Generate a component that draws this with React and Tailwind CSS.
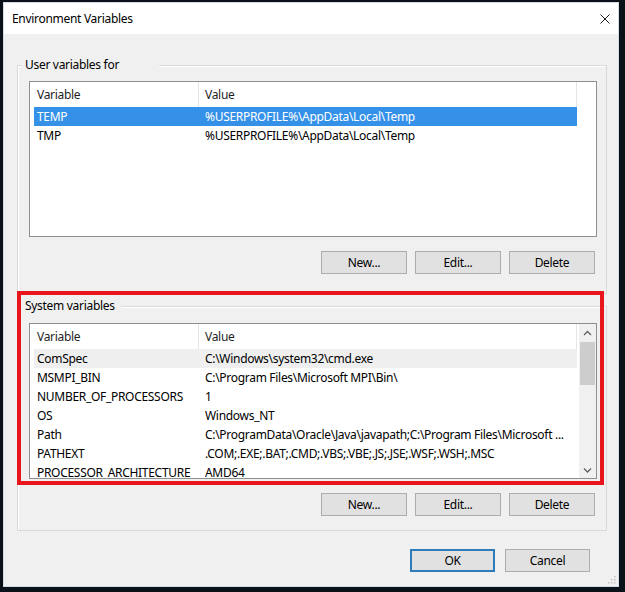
import React from 'react';

const userVars = [
  { name: 'TEMP', value: '%USERPROFILE%\\AppData\\Local\\Temp', state: 'selected' },
  { name: 'TMP', value: '%USERPROFILE%\\AppData\\Local\\Temp' },
];

const systemVars = [
  { name: 'ComSpec', value: 'C:\\Windows\\system32\\cmd.exe', state: 'hover' },
  { name: 'MSMPI_BIN', value: 'C:\\Program Files\\Microsoft MPI\\Bin\\' },
  { name: 'NUMBER_OF_PROCESSORS', value: '1' },
  { name: 'OS', value: 'Windows_NT' },
  { name: 'Path', value: 'C:\\ProgramData\\Oracle\\Java\\javapath;C:\\Program Files\\Microsoft ...' },
  { name: 'PATHEXT', value: '.COM;.EXE;.BAT;.CMD;.VBS;.VBE;.JS;.JSE;.WSF;.WSH;.MSC' },
  { name: 'PROCESSOR_ARCHITECTURE', value: 'AMD64' },
];

const WinButton = ({ children, isDefault, narrow }) => (
  <button
    className={`h-[23px] bg-[#e1e1e1] text-[12px] text-black ${narrow ? 'w-[85px]' : 'w-[86px]'} ${
      isDefault
        ? 'border border-[#2f7cb8] shadow-[inset_0_0_0_1px_#2f7cb8]'
        : 'border border-[#adadad]'
    }`}
  >
    {children}
  </button>
);

const Chevron = ({ down }) => (
  <svg width="9" height="6" viewBox="0 0 9 6">
    <polyline
      points={down ? '1,1.5 4.5,5 8,1.5' : '1,5 4.5,1.5 8,5'}
      fill="none"
      stroke="#606060"
      strokeWidth="1.3"
    />
  </svg>
);

const Scrollbar = () => (
  <div className="w-[17px] shrink-0 bg-[#f0f0f0] flex flex-col">
    <div className="h-[17px] flex items-center justify-center">
      <Chevron />
    </div>
    <div className="h-[43px] mt-[1px] mx-[1px] bg-[#cdcdcd]" />
    <div className="flex-1" />
    <div className="h-[17px] flex items-center justify-center">
      <Chevron down />
    </div>
  </div>
);

const VarList = ({ rows, scroll }) => (
  <div className="ml-[11px] mr-[9px] h-[156px] shrink-0 border border-[#8f8f8f] bg-white flex overflow-hidden">
    <div className="flex-1 min-w-0 flex flex-col">
      {/* header */}
      <div className="flex h-[25px] shrink-0 text-[#1e1e1e]">
        <div className="w-[169px] h-full pl-[7px] flex items-center border-r border-[#e5e5e5]">Variable</div>
        <div className="w-[378px] h-full pl-[6px] flex items-center border-r border-[#e5e5e5]">Value</div>
      </div>
      {rows.map((r) => (
        <div
          key={r.name}
          className={`ml-[4px] w-[543px] h-[19px] shrink-0 flex items-center whitespace-nowrap ${
            r.state === 'selected'
              ? 'bg-[#3591e8] text-white'
              : r.state === 'hover'
              ? 'bg-[#efefef] text-black'
              : 'text-black'
          }`}
        >
          <div className="w-[171px] shrink-0 pl-[3px] overflow-hidden">{r.name}</div>
          <div className="flex-1 overflow-hidden">{r.value}</div>
        </div>
      ))}
    </div>
    {scroll && <Scrollbar />}
  </div>
);

const GroupBox = ({ label, labelWidth, height, listMt, children }) => (
  <div
    className={`border border-[#d9d9d9] shadow-[inset_1px_1px_0_#ffffff] flex flex-col ${height}`}
  >
    <div className={`-mt-[9px] ml-[4px] h-[16px] leading-[16px] pl-[3px] bg-[#f0f0f0] self-start ${labelWidth}`}>
      {label}
    </div>
    <div className={listMt} />
    {children}
  </div>
);

const ButtonRow = ({ children }) => (
  <div className="mt-[14px] mr-[11px] flex justify-end gap-[8px]">{children}</div>
);

export default function App() {
  return (
    <div className="relative w-[625px] h-[592px] bg-[#0b1119] pl-[3px] pt-[2px] pr-[6px] pb-[5px] font-['Noto_Sans',sans-serif] text-[12px] tracking-[-0.3px] text-black">
      <div className="relative h-full flex flex-col border border-[#d3dbe3] bg-[#f0f0f0]">
        {/* title bar */}
        <div className="h-[31px] shrink-0 bg-white flex items-center justify-between pl-[8px] pr-[8px]">
          <span className="text-[12px]">Environment Variables</span>
          <svg width="10" height="10" viewBox="0 0 10 10">
            <path d="M0.5 0.5 L9.5 9.5 M9.5 0.5 L0.5 9.5" stroke="#1a1a1a" strokeWidth="1" />
          </svg>
        </div>

        <div className="flex-1 pl-[13px] pr-[11px] pt-[31px] flex flex-col">
          <GroupBox label="User variables for" labelWidth="w-[137px]" height="h-[229px]" listMt="h-[8px]">
            <VarList rows={userVars} />
            <ButtonRow>
              <WinButton>New...</WinButton>
              <WinButton>Edit...</WinButton>
              <WinButton>Delete</WinButton>
            </ButtonRow>
          </GroupBox>

          <div className="h-[12px]" />

          <GroupBox label="System variables" labelWidth="pr-[6px]" height="h-[225px]" listMt="h-[9px]">
            <VarList rows={systemVars} scroll />
            <ButtonRow>
              <WinButton>New...</WinButton>
              <WinButton>Edit...</WinButton>
              <WinButton>Delete</WinButton>
            </ButtonRow>
          </GroupBox>

          <div className="mt-[18px] mr-[17px] flex justify-end gap-[10px]">
            <WinButton isDefault narrow>OK</WinButton>
            <WinButton narrow>Cancel</WinButton>
          </div>
        </div>

        {/* size grip */}
        <svg className="absolute right-[2px] bottom-[2px]" width="10" height="10" viewBox="0 0 10 10">
          <g fill="#c4c4c4">
            <rect x="8" y="2" width="1.5" height="1.5" />
            <rect x="5" y="5" width="1.5" height="1.5" />
            <rect x="8" y="5" width="1.5" height="1.5" />
            <rect x="2" y="8" width="1.5" height="1.5" />
            <rect x="5" y="8" width="1.5" height="1.5" />
            <rect x="8" y="8" width="1.5" height="1.5" />
          </g>
        </svg>
      </div>

      {/* annotation highlight */}
      <div className="absolute left-[17px] top-[291px] w-[587px] h-[194px] border-4 border-[#e8151d] pointer-events-none" />
    </div>
  );
}
